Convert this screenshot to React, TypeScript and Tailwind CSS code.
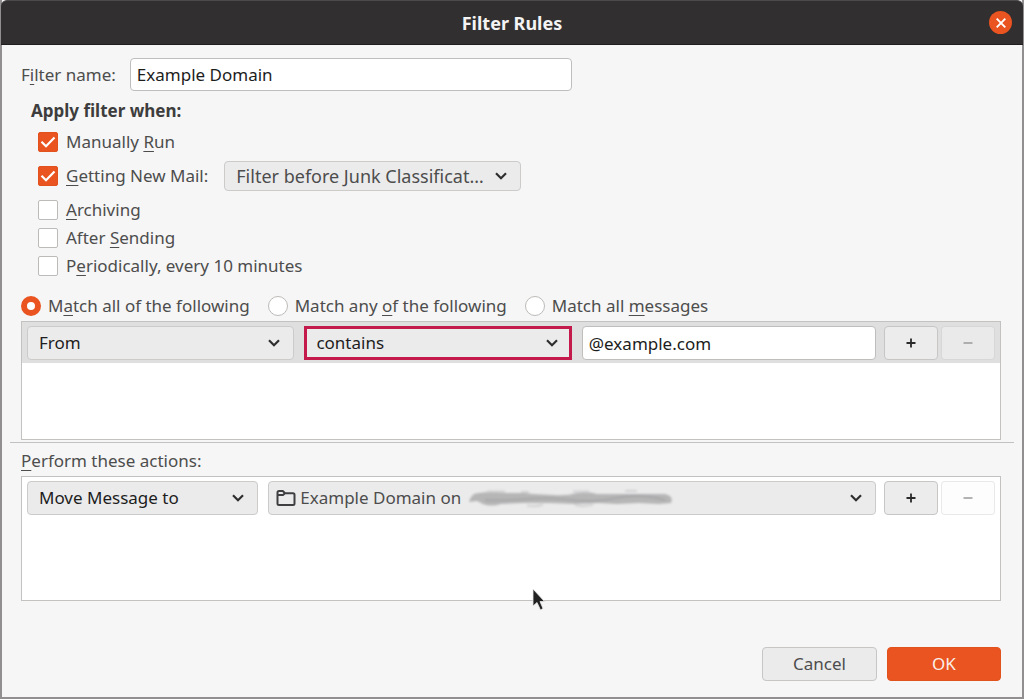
import type { ReactNode } from 'react';
import clsx from 'clsx';

const Key = ({ children }: { children: ReactNode }) => (
  <span className="underline decoration-1 underline-offset-3">{children}</span>
);

const triggers = [
  { id: 'manual', label: <>Manually <Key>R</Key>un</>, checked: true },
  { id: 'new-mail', label: <><Key>G</Key>etting New Mail:</>, checked: true, timing: true },
  { id: 'archive', label: <><Key>A</Key>rchiving</>, checked: false },
  { id: 'sending', label: <>After <Key>S</Key>ending</>, checked: false },
  { id: 'periodic', label: <>P<Key>e</Key>riodically, every 10 minutes</>, checked: false },
];

const matchModes = [
  { id: 'all', label: <>M<Key>a</Key>tch all of the following</> },
  { id: 'any', label: <>Match any <Key>o</Key>f the following</> },
  { id: 'messages', label: <>Match all <Key>m</Key>essages</> },
];

function Checkbox({ id, label, checked }: { id: string; label: ReactNode; checked: boolean }) {
  return (
    <label htmlFor={id} className="flex items-center gap-2">
      <span className="relative size-5">
        <input
          id={id}
          type="checkbox"
          defaultChecked={checked}
          className="peer block size-5 appearance-none rounded-xs border border-[#bdbbb9] bg-white checked:border-[#e2521d] checked:bg-[#e95420]"
        />
        <svg
          viewBox="0 0 20 20"
          className="pointer-events-none absolute inset-0 hidden size-5 peer-checked:block"
          fill="none"
          stroke="#fff"
          strokeWidth="2.2"
        >
          <path d="M3.5 9.8 L8 14.2 L16.5 5.5" />
        </svg>
      </span>
      <span>{label}</span>
    </label>
  );
}

type SelectProps = { label: string; value: string; className?: string; children?: ReactNode };

function Select({ label, value, className, children }: SelectProps) {
  return (
    <div className="relative">
      <select
        aria-label={label}
        className={clsx(
          'block w-full appearance-none bg-[#ebebec] pr-8',
          className ?? 'h-[34px] rounded-sm border border-[#cdcbca] pl-[11px] text-[#1d1d1d]',
        )}
      >
        <option>{value}</option>
      </select>
      {children}
      <svg
        viewBox="0 0 12 8"
        className="pointer-events-none absolute top-1/2 right-[14px] h-2 w-3 -translate-y-1/2"
        fill="none"
        stroke="#2e2e2e"
        strokeWidth="2.2"
      >
        <path d="M1 1.3 L6 6.2 L11 1.3" />
      </svg>
    </div>
  );
}

function RowButtons({ item }: { item: string }) {
  return (
    <div className="flex gap-[3px]">
      <button
        type="button"
        aria-label={`Add ${item}`}
        className="flex h-[34px] w-[54px] items-center justify-center rounded-sm border border-[#c8c6c5] bg-[#ececed]"
      >
        <svg viewBox="0 0 10 10" className="size-[10px]" stroke="#2a2a2a" strokeWidth="1.8">
          <path d="M0.5 5 H9.5 M5 0.5 V9.5" />
        </svg>
      </button>
      <button
        type="button"
        aria-label={`Remove ${item}`}
        disabled
        className="flex h-[34px] w-[54px] items-center justify-center rounded-sm border border-black/8 bg-[#fafafa]/40"
      >
        <svg viewBox="0 0 10 10" className="size-[10px]" stroke="#9a9a9a" strokeWidth="1.5">
          <path d="M0.5 5 H9.5" />
        </svg>
      </button>
    </div>
  );
}

export default function App() {
  return (
    <main className="flex min-h-screen flex-col border-x-2 border-b-2 border-[#918f8f] bg-[#f6f6f6] font-['Noto_Sans',sans-serif] text-[17px] leading-6 text-[#4d4d4d]">
      <header className="-mx-px grid h-[45px] grid-cols-[1fr_auto_1fr] items-center rounded-t-md border-t border-b border-t-[#4c4a4a] border-b-[#1f1d1d] bg-[#322f30] px-[11px]">
        <h1 className="col-start-2 text-lg leading-6 font-bold text-[#f4f4f4]">Filter Rules</h1>
        <button
          type="button"
          aria-label="Close"
          className="flex size-[23px] items-center justify-center justify-self-end rounded-full bg-[#e95420]"
        >
          <svg viewBox="0 0 10 10" className="size-[10px]" stroke="#fff" strokeWidth="1.9">
            <path d="M0.7 0.7 L9.3 9.3 M9.3 0.7 L0.7 9.3" />
          </svg>
        </button>
      </header>

      <form className="flex grow flex-col px-2 pt-[13px] pb-4" onSubmit={(e) => e.preventDefault()}>
        <section className="pr-[13px] pl-[11px]">
          <div className="flex items-center gap-[14px]">
            <label htmlFor="filter-name">
              F<Key>i</Key>lter name:
            </label>
            <input
              id="filter-name"
              defaultValue="Example Domain"
              className="h-[33px] w-[442px] rounded-sm border border-[#c0bebd] bg-white px-[6px] text-[#1d1d1d]"
            />
          </div>

          <fieldset className="mt-2 pl-[17px]">
            <legend className="-ml-[7px] mb-[5px] font-bold text-[#3d3d3d]">Apply filter when:</legend>
            {triggers.map((t) => (
              <div key={t.id} className={clsx('flex items-center gap-4', t.timing ? 'h-10' : 'h-7')}>
                <Checkbox id={t.id} label={t.label} checked={t.checked} />
                {t.timing && (
                  <div className="w-[297px]">
                    <Select
                      label="When to filter new mail"
                      value="Filter before Junk Classificat…"
                      className="h-[30px] rounded-sm border border-[#cdcbca] pl-[11px] text-lg leading-6"
                    />
                  </div>
                )}
              </div>
            ))}
          </fieldset>

          <div className="mt-3 flex h-7 items-center gap-[18px]">
            {matchModes.map((m, i) => (
              <label key={m.id} className="flex items-center gap-[7px]">
                <input
                  type="radio"
                  name="match"
                  defaultChecked={i === 0}
                  className="size-5 appearance-none rounded-full border border-[#bdbbb9] bg-white checked:border-6 checked:border-[#e95420]"
                />
                <span>{m.label}</span>
              </label>
            ))}
          </div>

          <div className="mt-px min-h-[119px] border border-[#c4c2c1] bg-white">
            <div className="flex gap-2 bg-[#dfdfdf] px-[5px] pt-1 pb-[3px]">
              <div className="grid grow grid-cols-[10fr_10fr_11fr] gap-[10px]">
                <Select label="Field" value="From" />
                <Select
                  label="Condition"
                  value="contains"
                  className="h-[34px] border-[3px] border-[#c31a4b] pl-[9px] text-[#1d1d1d]"
                />
                <input
                  aria-label="Value"
                  defaultValue="@example.com"
                  className="h-[34px] w-full rounded-sm border border-[#c0bebd] bg-white px-[6px] text-[#1d1d1d]"
                />
              </div>
              <RowButtons item="condition" />
            </div>
          </div>
        </section>

        <hr className="mt-0.5 border-[#c4c2c1]" />

        <section className="mt-1 pr-[13px] pl-[11px]">
          <h2 className="flex h-7 items-center">
            <span><Key>P</Key>erform these actions:</span>
          </h2>
          <div className="relative mt-px min-h-[125px] border border-[#c4c2c1] bg-white">
            <div className="flex gap-2 px-[5px] pt-1 pb-[3px]">
              <div className="grid grow grid-cols-[231fr_607fr] gap-[10px]">
                <Select label="Action" value="Move Message to" />
                <Select
                  label="Target folder"
                  value="Example Domain on"
                  className="h-[34px] rounded-sm border border-[#cdcbca] pl-[31px]"
                >
                  <svg
                    viewBox="0 0 20 18"
                    className="pointer-events-none absolute top-2 left-2 h-[18px] w-5"
                    fill="none"
                    stroke="#3f3f42"
                    strokeWidth="2"
                    strokeLinejoin="round"
                  >
                    <path d="M1.5 14.5 V3.5 Q1.5 2 3 2 H6.8 L9 4.2 H17 Q18.5 4.2 18.5 5.7 V14.5 Q18.5 16 17 16 H3 Q1.5 16 1.5 14.5 Z M1.5 6 H7 L9 4.2" />
                  </svg>
                  {/* smudged account name */}
                  <svg
                    viewBox="0 0 206 20"
                    className="pointer-events-none absolute top-2 left-[199px] h-5 w-[206px] blur-[1px]"
                  >
                    <path
                      fill="#b6b6b7"
                      d="M2 13 Q4 4 12 4 Q25 2 40 4 L58 4 L66 5 L86 6 Q100 7 110 4 Q122 2 130 5 L154 5 L174 5 L198 5 Q207 7 204 14 L192 15 L172 14 L150 15 L132 14 L108 15 L82 14 L56 14 L34 15 Q24 18 16 15 L10 12 Z"
                    />
                    <path
                      fill="none"
                      stroke="#d2d2d3"
                      strokeWidth="2"
                      d="M20 2.5 H38 M54 3 H62 M106 2.5 H122 M158 2 H170 M60 16.5 Q70 18 76 15.5 M108 16 Q118 18 126 15.5"
                    />
                    <path fill="none" stroke="#a8a8aa" strokeWidth="2" d="M18 11 Q40 12 60 10 T104 11 T150 9 T198 11" />
                  </svg>
                </Select>
              </div>
              <RowButtons item="action" />
            </div>

            <svg
              viewBox="0 0 14 24"
              className="pointer-events-none absolute top-[111px] left-[52%] h-6 w-[14px]"
            >
              <path
                d="M2 1 V18 L6 14.5 L9.5 22 L12 20.5 L9 13.5 H13.5 Z"
                fill="#222"
                stroke="#e8e8e8"
                strokeWidth="0.8"
              />
            </svg>
          </div>
        </section>

        <footer className="mt-auto flex justify-end gap-[10px] pt-6 pr-[13px] pl-[11px]">
          <button
            type="button"
            className="h-[34px] w-[115px] rounded-sm border border-[#c8c6c5] bg-[#ebebeb]"
          >
            Cancel
          </button>
          <button
            type="submit"
            className="h-[34px] w-[114px] rounded-sm border border-[#e2521d] bg-[#e95420] text-[#fbeee9]"
          >
            OK
          </button>
        </footer>
      </form>
    </main>
  );
}
